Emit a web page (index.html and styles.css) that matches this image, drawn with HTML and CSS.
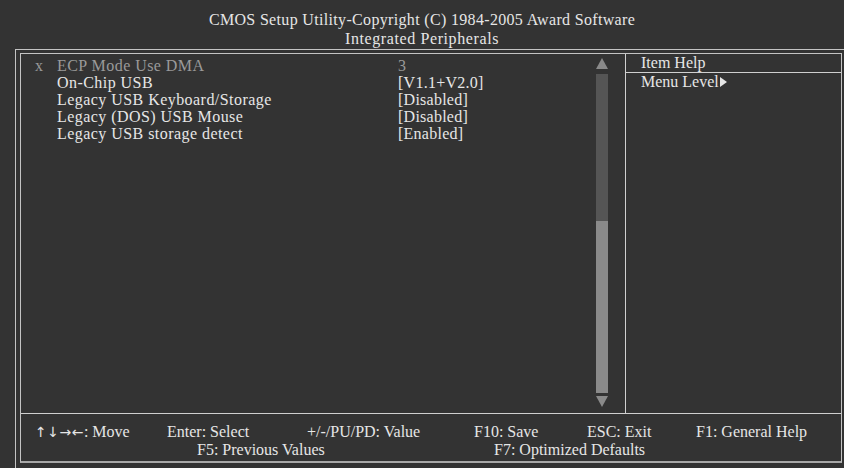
FILE: index.html
```html
<!DOCTYPE html>
<html lang="en">
<head>
  <meta charset="UTF-8" />
  <title>Integrated Peripherals</title>
  <link rel="stylesheet" href="styles.css">
</head>
<body>

  <!-- Title -->
  <header class="title">
    <div>CMOS Setup Utility-Copyright (C) 1984-2005 Award Software</div>
    <div class="subtitle">Integrated Peripherals</div>
  </header>

  <div class="frame">
    <div class="inner">

      <div class="main">
        <div class="list">
          <div class="row disabled">
            <span class="mark">x</span>
            <span class="name">ECP Mode Use DMA</span>
            <span class="value">3</span>
          </div>
          <div class="row">
            <span class="mark"></span>
            <span class="name">On-Chip USB</span>
            <span class="value">[V1.1+V2.0]</span>
          </div>
          <div class="row">
            <span class="mark"></span>
            <span class="name">Legacy USB Keyboard/Storage</span>
            <span class="value">[Disabled]</span>
          </div>
          <div class="row">
            <span class="mark"></span>
            <span class="name">Legacy (DOS) USB Mouse</span>
            <span class="value">[Disabled]</span>
          </div>
          <div class="row">
            <span class="mark"></span>
            <span class="name">Legacy USB storage detect</span>
            <span class="value">[Enabled]</span>
          </div>
        </div>

        <div class="scrollbar">
          <div class="arrow-up"></div>
          <div class="track">
            <div class="thumb"></div>
          </div>
          <div class="arrow-down"></div>
        </div>

        <div class="help">
          <div class="help-title">Item Help</div>
          <div class="help-text">Menu Level<span class="tri"></span></div>
        </div>
      </div>

      <footer class="keys">
        <div class="keyrow">
          <span class="k1"><span class="arrows">↑↓→←</span>: Move</span>
          <span class="k2">Enter: Select</span>
          <span class="k3">+/-/PU/PD: Value</span>
          <span class="k4">F10: Save</span>
          <span class="k5">ESC: Exit</span>
          <span>F1: General Help</span>
        </div>
        <div class="keyrow second">
          <span class="k6">F5: Previous Values</span>
          <span>F7: Optimized Defaults</span>
        </div>
      </footer>

    </div>
  </div>

</body>
</html>
```

FILE: styles.css
```css
body {
  font-family: "Liberation Serif", "Times New Roman", serif;
  font-size: 16px;
  margin: 0;
  padding: 0;
  background-color: #333333;
  color: #e6e6e6;
  width: 844px;
  height: 468px;
  overflow: hidden;
}

.title {
  height: 49px;
  box-sizing: border-box;
  padding-top: 10px;
  line-height: 19px;
  text-align: center;
  letter-spacing: 0.33px;
}

.title .subtitle {
  letter-spacing: 0.6px;
}

.frame {
  margin-left: 15px;
  width: 832px;
  height: 420px;
  box-sizing: border-box;
  border: 1px solid #c4c4c4;
  padding: 3px 0 0 4px;
}

.inner {
  width: 822px;
  height: 410px;
  box-sizing: border-box;
  border: 1px solid #c4c4c4;
  border-bottom: 2px solid #a8a8a8;
  display: flex;
  flex-direction: column;
}

.main {
  display: flex;
  height: 359px;
  border-bottom: 1px solid #d0d0d0;
}

.list {
  flex: 1;
  padding-top: 3px;
}

.row {
  display: flex;
  line-height: 17px;
}

.row .mark {
  width: 22px;
  padding-left: 14px;
}

.row .name {
  width: 341px;
  letter-spacing: 0.45px;
}

.row .value {
  letter-spacing: 0.25px;
}

.disabled {
  color: #9a9a9a;
}

/* scrollbar */
.scrollbar {
  width: 12px;
  margin-right: 17px;
  display: flex;
  flex-direction: column;
  align-items: center;
  padding-top: 4px;
}

.arrow-up {
  width: 0;
  height: 0;
  border-left: 6px solid transparent;
  border-right: 6px solid transparent;
  border-bottom: 11px solid #8a8a8a;
}

.track {
  width: 12px;
  height: 319px;
  margin-top: 5px;
  background-color: #555555;
  display: flex;
  flex-direction: column;
  justify-content: flex-end;
}

.thumb {
  height: 172px;
  background-color: #8a8a8a;
}

.arrow-down {
  width: 0;
  height: 0;
  margin-top: 3px;
  border-left: 6px solid transparent;
  border-right: 6px solid transparent;
  border-top: 11px solid #8a8a8a;
}

/* help panel */
.help {
  width: 215px;
  border-left: 1px solid #d0d0d0;
}

.help-title {
  height: 18px;
  line-height: 18px;
  padding-left: 15px;
  border-bottom: 1px solid #d0d0d0;
}

.help-text {
  line-height: 17px;
  padding-left: 15px;
}

.tri {
  display: inline-block;
  width: 0;
  height: 0;
  margin-left: 1px;
  border-top: 5px solid transparent;
  border-bottom: 5px solid transparent;
  border-left: 7px solid #e6e6e6;
}

/* key legend */
.keys {
  padding-top: 9px;
  line-height: 18px;
}

.keyrow {
  display: flex;
  padding-left: 14px;
}

.keyrow.second {
  padding-left: 176px;
}

.arrows {
  font-family: "DejaVu Sans", sans-serif;
  font-size: 14px;
  letter-spacing: 0.5px;
}

.k1 { width: 132px; }
.k2 { width: 140px; }
.k3 { width: 167px; }
.k4 { width: 113px; }
.k5 { width: 109px; }
.k6 { width: 297px; }
```
